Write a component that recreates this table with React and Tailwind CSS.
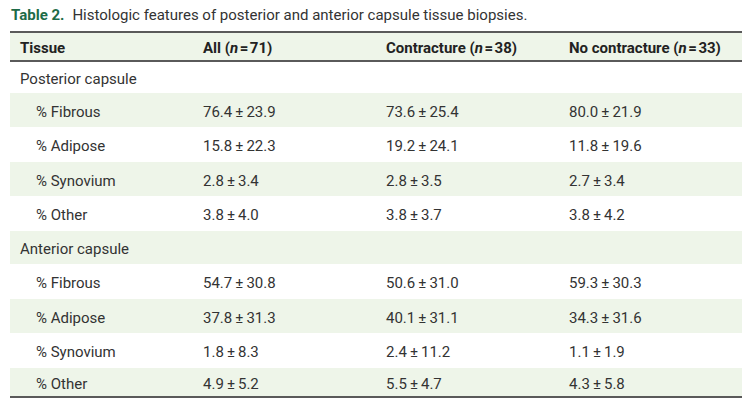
const rows = [
  { label: "Posterior capsule", section: true, h: "h-[31px]" },
  { label: "% Fibrous", values: ["76.4 ± 23.9", "73.6 ± 25.4", "80.0 ± 21.9"], h: "h-[34px]" },
  { label: "% Adipose", values: ["15.8 ± 22.3", "19.2 ± 24.1", "11.8 ± 19.6"], h: "h-[35px]" },
  { label: "% Synovium", values: ["2.8 ± 3.4", "2.8 ± 3.5", "2.7 ± 3.4"], h: "h-[34px]" },
  { label: "% Other", values: ["3.8 ± 4.0", "3.8 ± 3.7", "3.8 ± 4.2"], h: "h-[35px]" },
  { label: "Anterior capsule", section: true, h: "h-[33px]" },
  { label: "% Fibrous", values: ["54.7 ± 30.8", "50.6 ± 31.0", "59.3 ± 30.3"], h: "h-[35px]" },
  { label: "% Adipose", values: ["37.8 ± 31.3", "40.1 ± 31.1", "34.3 ± 31.6"], h: "h-[34px]" },
  { label: "% Synovium", values: ["1.8 ± 8.3", "2.4 ± 11.2", "1.1 ± 1.9"], h: "h-[35px]" },
  { label: "% Other", values: ["4.9 ± 5.2", "5.5 ± 4.7", "4.3 ± 5.8"], h: "h-[28px]" },
];

function Header({ label, n }) {
  return (
    <div className="pl-[10px]">
      {label} (<i>n</i>{"\u200a=\u200a"}{n})
    </div>
  );
}

export default function App() {
  return (
    <main
      className="w-[752px] h-[412px] bg-white text-[#333] overflow-hidden"
      style={{ fontFamily: "Roboto, 'Noto Sans', sans-serif" }}
    >
      <p className="pl-[11px] pt-[5px] h-[31px] text-[15px] leading-[20px] text-[#333]">
        <span className="font-bold text-[#1d6b47]">Table 2.</span>
        <span className="ml-[8px]">
          Histologic features of posterior and anterior capsule tissue biopsies.
        </span>
      </p>

      <div className="mx-[10px] border-t-2 border-b-2 border-[#5a5a5a]">
        <div className="grid grid-cols-4 h-[29px] pt-[3px] items-center bg-[#eef5e9] border-b-2 border-[#5a5a5a] text-[15px] font-bold text-[#222]">
          <div className="pl-[10px]">Tissue</div>
          <Header label="All" n="71" />
          <Header label="Contracture" n="38" />
          <Header label="No contracture" n="33" />
        </div>

        {rows.map((row, i) => {
          // stripes run on across the section labels
          const shaded = i % 2 === 1;
          return (
            <div
              key={i}
              className={`grid grid-cols-4 items-center pt-[4px] text-[15px] ${row.h} ${
                shaded ? "bg-[#eef5e9]" : "bg-white"
              }`}
            >
              {row.section ? (
                <div className="pl-[10px] col-span-4">{row.label}</div>
              ) : (
                <>
                  <div className="pl-[26px]">{row.label}</div>
                  {row.values.map((v, j) => (
                    <div key={j} className="pl-[10px]">
                      {v.replace(" ± ", "\u2009±\u2009")}
                    </div>
                  ))}
                </>
              )}
            </div>
          );
        })}
      </div>
    </main>
  );
}
